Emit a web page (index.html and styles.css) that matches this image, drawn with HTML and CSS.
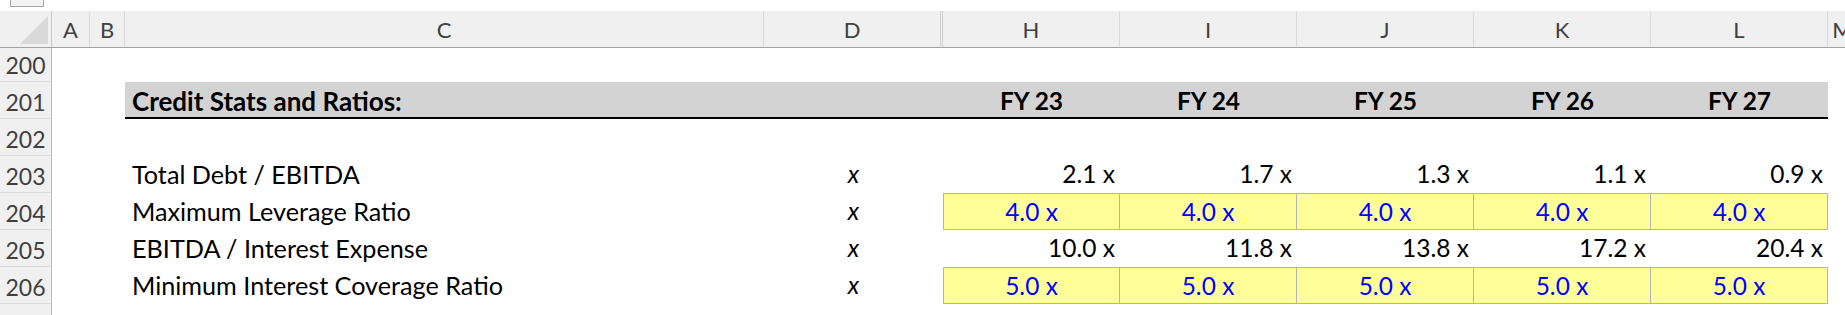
FILE: index.html
```html
<!DOCTYPE html>
<html lang="en">
<head>
<meta charset="utf-8">
<title>Credit Stats and Ratios</title>
<link rel="stylesheet" href="styles.css">
</head>
<body>
<div class="topstrip"><div class="namebox"></div></div>
<div class="sheet">
  <div class="row colhead">
    <div class="corner"><svg width="52" height="36" viewBox="0 0 52 36"><polygon points="20,33 48,33 48,5" fill="#d9d9d9"/></svg></div>
    <div class="ch">A</div>
    <div class="ch">B</div>
    <div class="ch">C</div>
    <div class="ch hidden-after">D</div>
    <div class="ch">H</div>
    <div class="ch">I</div>
    <div class="ch">J</div>
    <div class="ch">K</div>
    <div class="ch">L</div>
    <div class="ch">M</div>
  </div>

  <div class="row r-short">
    <div class="rh">200</div>
  </div>

  <div class="row">
    <div class="rh">201</div>
    <div class="c"></div><div class="c"></div>
    <div class="c title label">Credit Stats and Ratios:</div>
    <div class="c title"></div>
    <div class="c title fy">FY 23</div>
    <div class="c title fy">FY 24</div>
    <div class="c title fy">FY 25</div>
    <div class="c title fy">FY 26</div>
    <div class="c title fy">FY 27</div>
  </div>

  <div class="row">
    <div class="rh">202</div>
  </div>

  <div class="row">
    <div class="rh">203</div>
    <div class="c"></div><div class="c"></div>
    <div class="c label">Total Debt / EBITDA</div>
    <div class="c unit">x</div>
    <div class="c num">2.1 x</div>
    <div class="c num">1.7 x</div>
    <div class="c num">1.3 x</div>
    <div class="c num">1.1 x</div>
    <div class="c num">0.9 x</div>
  </div>

  <div class="row">
    <div class="rh">204</div>
    <div class="c"></div><div class="c"></div>
    <div class="c label">Maximum Leverage Ratio</div>
    <div class="c unit">x</div>
    <div class="c input first">4.0 x</div>
    <div class="c input">4.0 x</div>
    <div class="c input">4.0 x</div>
    <div class="c input">4.0 x</div>
    <div class="c input">4.0 x</div>
  </div>

  <div class="row">
    <div class="rh">205</div>
    <div class="c"></div><div class="c"></div>
    <div class="c label">EBITDA / Interest Expense</div>
    <div class="c unit">x</div>
    <div class="c num">10.0 x</div>
    <div class="c num">11.8 x</div>
    <div class="c num">13.8 x</div>
    <div class="c num">17.2 x</div>
    <div class="c num">20.4 x</div>
  </div>

  <div class="row">
    <div class="rh">206</div>
    <div class="c"></div><div class="c"></div>
    <div class="c label">Minimum Interest Coverage Ratio</div>
    <div class="c unit">x</div>
    <div class="c input first">5.0 x</div>
    <div class="c input">5.0 x</div>
    <div class="c input">5.0 x</div>
    <div class="c input">5.0 x</div>
    <div class="c input">5.0 x</div>
  </div>

  <div class="row r-tail">
    <div class="rh"></div>
  </div>
</div>
</body>
</html>
```

FILE: styles.css
```css
html, body {
  margin: 0;
  padding: 0;
  background: #ffffff;
  overflow: hidden;
}

body {
  width: 1845px;
  height: 315px;
  font-family: Lato, "Open Sans", sans-serif;
  color: #000;
}

.topstrip {
  height: 11px;
}

.namebox {
  margin-left: 10px;
  width: 32px;
  height: 6px;
  background: #f3f3f3;
  border: 1px solid #a8a8a8;
  border-top: none;
}

.sheet {
  width: 1858px;
}

.row {
  display: grid;
  grid-template-columns: 52px 38px 35px 639px 179px 177px 177px 177px 177px 177px 30px;
  height: 37px;
}

.r-short { height: 34px; }
.r-tail { height: 11px; }

/* column header */
.colhead {
  background: #f0f0f0;
  border-bottom: 1px solid #a3a3a3;
  height: 37px;
  box-sizing: border-box;
}

.corner {
  border-right: 1px solid #c8c8c8;
  box-sizing: border-box;
  overflow: hidden;
}
.corner svg { display: block; }

.ch {
  font-size: 22px;
  line-height: 27px;
  color: #404040;
  display: flex;
  align-items: flex-end;
  justify-content: center;
  padding-bottom: 4px;
  border-right: 1px solid #dadada;
  box-sizing: border-box;
}

.hidden-after {
  border-right: 3px double #cfcfcf;
}

/* row header */
.rh {
  background: #f0f0f0;
  border-right: 1px solid #b8b8b8;
  border-bottom: 1px solid #dcdcdc;
  box-sizing: border-box;
  font-size: 23px;
  line-height: 28px;
  color: #404040;
  display: flex;
  align-items: flex-end;
  justify-content: center;
  padding-bottom: 2px;
}

.r-tail .rh { border-bottom: none; }

/* cells */
.c {
  font-size: 24.5px;
  line-height: 30px;
  display: flex;
  align-items: flex-end;
  padding-bottom: 4px;
  box-sizing: border-box;
  white-space: nowrap;
}

.label {
  padding-left: 7px;
  font-size: 25.2px;
}

.title {
  background: #d3d3d3;
  border-bottom: 2px solid #000;
  font-weight: 700;
  padding-bottom: 1px;
}

.title.label {
  font-size: 26px;
}

.fy {
  justify-content: center;
}

.unit {
  justify-content: center;
  font-style: italic;
}

.num {
  justify-content: flex-end;
  padding-right: 5px;
}

.input {
  justify-content: center;
  background: #ffff99;
  color: #0000ff;
  border-top: 1px solid #b4b4b4;
  border-bottom: 1px solid #b4b4b4;
  border-right: 1px solid #b4b4b4;
  padding-bottom: 2px;
}

.input.first {
  border-left: 1px solid #b4b4b4;
}
```
